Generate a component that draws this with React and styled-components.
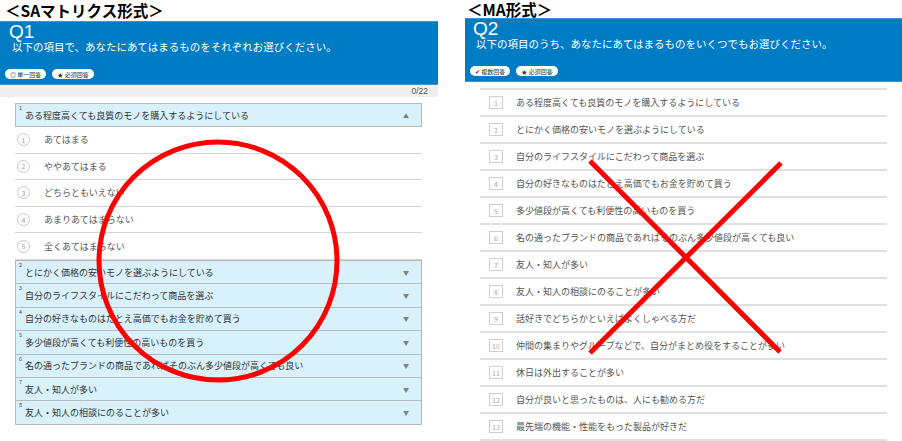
import React from "react";
import styled, { createGlobalStyle } from "styled-components";

const GlobalStyle = createGlobalStyle`
  body {
    margin: 0;
    background: #fff;
    font-family: "Noto Sans CJK JP", "Noto Sans", sans-serif;
  }
`;

const Page = styled.div`
  position: relative;
  width: 902px;
  height: 441px;
  display: flex;
  overflow: hidden;
`;

const Panel = styled.section`
  width: ${props => props.width}px;
  margin-left: ${props => props.offset || 0}px;
  display: flex;
  flex-direction: column;
`;

const Title = styled.h2`
  margin: 0;
  height: ${props => props.h}px;
  padding-left: ${props => props.pad}px;
  font-size: 15.5px;
  font-weight: 700;
  line-height: ${props => props.h}px;
  color: #000;
  white-space: nowrap;
`;

const Header = styled.div`
  height: ${props => props.h}px;
  box-sizing: border-box;
  padding-left: ${props => props.pad}px;
  background: #007cc4;
  border-top: 1px solid #3b95d2;
  border-bottom: 1px solid #3b95d2;
  color: #fff;
  display: flex;
  flex-direction: column;
`;

const QNum = styled.div`
  font-family: "Liberation Sans", Arial, sans-serif;
  font-size: 19px;
  line-height: 18px;
  height: 17px;
  margin-top: 1px;
`;

const QText = styled.div`
  font-size: 10.5px;
  line-height: 12px;
  height: 12px;
  margin-top: 1px;
  padding-left: 3px;
  white-space: nowrap;
`;

const Badges = styled.div`
  margin-top: auto;
  margin-left: ${props => props.shift}px;
  margin-bottom: 5px;
  display: flex;
  gap: 6px;
`;

const Badge = styled.span`
  height: 10px;
  padding: 0 5px;
  border-radius: 6px;
  background: #fff;
  color: #333;
  font-size: 6px;
  display: flex;
  align-items: center;
  gap: 4px;
  white-space: nowrap;
`;

const Counter = styled.div`
  height: 12px;
  background: #efefef;
  color: #555;
  font-family: "Liberation Sans", Arial, sans-serif;
  font-size: 8.5px;
  line-height: 12px;
  text-align: right;
  padding-right: 10px;
`;

const Matrix = styled.div`
  width: 407px;
  margin: 6px 0 0 15px;
  display: flex;
  flex-direction: column;
`;

const ItemHead = styled.div`
  height: ${props => props.h}px;
  flex-shrink: 0;
  box-sizing: border-box;
  margin-top: ${props => (props.first ? 0 : -1)}px;
  background: #d8f1fb;
  border: 1px solid #b8b8b8;
  display: flex;
  align-items: center;
  color: #333;
  font-size: 9px;
`;

const ItemNo = styled.span`
  align-self: flex-start;
  width: 9px;
  padding-left: 3px;
  margin-top: 1px;
  font-size: 5.5px;
  line-height: 7px;
  color: #444;
  box-sizing: border-box;
`;

const Arrow = styled.span`
  margin-left: auto;
  margin-right: 12px;
  font-size: 6px;
  color: #808080;
`;

const Choice = styled.div`
  height: 26.6px;
  flex-shrink: 0;
  box-sizing: border-box;
  border-bottom: 1px solid #d6d6d6;
  display: flex;
  align-items: center;
  color: #555;
  font-size: 9px;
`;

const Circle = styled.span`
  width: 13px;
  height: 13px;
  box-sizing: border-box;
  margin-left: 2px;
  border: 1px solid #c8c8c8;
  border-radius: 50%;
  color: #a0a0a0;
  font-size: 7px;
  display: flex;
  align-items: center;
  justify-content: center;
`;

const ChoiceText = styled.span`
  margin-left: 14px;
`;

const List = styled.div`
  width: 407px;
  margin: 6px 0 0 15px;
  border-top: 2px solid #e0e0e0;
`;

const Row = styled.div`
  height: 27px;
  box-sizing: border-box;
  border-bottom: 2px solid #e0e0e0;
  display: flex;
  align-items: center;
  color: #555;
  font-size: 9px;
`;

const NumBox = styled.span`
  width: 14px;
  height: 13px;
  box-sizing: border-box;
  margin-left: 9px;
  border: 1px solid #cfcfcf;
  color: #a8a8a8;
  font-size: 7px;
  display: flex;
  align-items: center;
  justify-content: center;
`;

const RowText = styled.span`
  margin-left: 13px;
`;

const Overlay = styled.svg`
  position: absolute;
  left: 0;
  top: 0;
  pointer-events: none;
`;

const items = [
  "ある程度高くても良質のモノを購入するようにしている",
  "とにかく価格の安いモノを選ぶようにしている",
  "自分のライフスタイルにこだわって商品を選ぶ",
  "自分の好きなものはたとえ高価でもお金を貯めて買う",
  "多少値段が高くても利便性の高いものを買う",
  "名の通ったブランドの商品であればそのぶん多少値段が高くても良い",
  "友人・知人が多い",
  "友人・知人の相談にのることが多い",
  "話好きでどちらかといえばよくしゃべる方だ",
  "仲間の集まりやグループなどで、自分がまとめ役をすることが多い",
  "休日は外出することが多い",
  "自分が良いと思ったものは、人にも勧める方だ",
  "最先端の機能・性能をもった製品が好きだ",
];

const choices = ["あてはまる", "ややあてはまる", "どちらともいえない", "あまりあてはまらない", "全くあてはまらない"];

export default function App() {
  return (
    <>
      <GlobalStyle />
      <Page>
        <Panel width={438}>
          <Title h={21} pad={5}>＜SAマトリクス形式＞</Title>
          <Header h={64} pad={9}>
            <QNum>Q1</QNum>
            <QText>以下の項目で、あなたにあてはまるものをそれぞれお選びください。</QText>
            <Badges shift={-4}>
              <Badge>◎ 単一回答</Badge>
              <Badge>★ 必須回答</Badge>
            </Badges>
          </Header>
          <Counter>0/22</Counter>
          <Matrix>
            <ItemHead first h={24}>
              <ItemNo>1</ItemNo>
              {items[0]}
              <Arrow>▲</Arrow>
            </ItemHead>
            {choices.map((c, i) => (
              <Choice key={c}>
                <Circle>{i + 1}</Circle>
                <ChoiceText>{c}</ChoiceText>
              </Choice>
            ))}
            {items.slice(1, 8).map((t, i) => (
              <ItemHead key={t} first={i === 0} h={24.4}>
                <ItemNo>{i + 2}</ItemNo>
                {t}
                <Arrow>▼</Arrow>
              </ItemHead>
            ))}
          </Matrix>
        </Panel>
        <Panel width={437} offset={27}>
          <Title h={18} pad={2}>＜MA形式＞</Title>
          <Header h={64} pad={8}>
            <QNum>Q2</QNum>
            <QText>以下の項目のうち、あなたにあてはまるものをいくつでもお選びください。</QText>
            <Badges shift={-3}>
              <Badge>✔ 複数回答</Badge>
              <Badge>★ 必須回答</Badge>
            </Badges>
          </Header>
          <List>
            {items.map((t, i) => (
              <Row key={t}>
                <NumBox>{i + 1}</NumBox>
                <RowText>{t}</RowText>
              </Row>
            ))}
          </List>
        </Panel>
        <Overlay width="902" height="441" viewBox="0 0 902 441">
          <circle cx="218" cy="261" r="119" fill="none" stroke="#ff0000" strokeWidth="5" />
          <line x1="590" y1="161" x2="780" y2="352" stroke="#ff0000" strokeWidth="5" />
          <line x1="781" y1="163" x2="590" y2="353" stroke="#ff0000" strokeWidth="5" />
        </Overlay>
      </Page>
    </>
  );
}
